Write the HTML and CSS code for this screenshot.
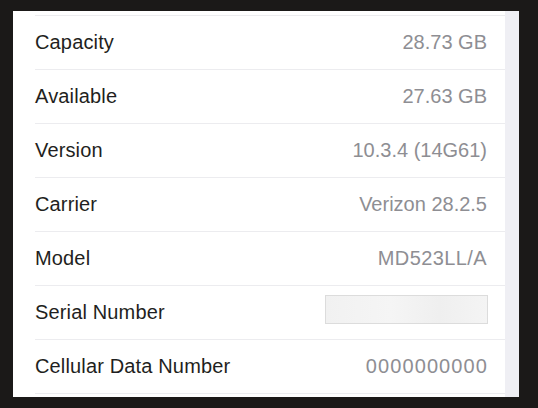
FILE: index.html
```html
<!DOCTYPE html>
<html>
<head>
<meta charset="utf-8">
<link rel="stylesheet" href="styles.css">
</head>
<body>
<div class="frame">
  <div class="panel">
    <ul class="list">
      <li class="row"><span class="label">Capacity</span><span class="value">28.73 GB</span></li>
      <li class="row"><span class="label">Available</span><span class="value">27.63 GB</span></li>
      <li class="row"><span class="label">Version</span><span class="value">10.3.4 (14G61)</span></li>
      <li class="row"><span class="label">Carrier</span><span class="value">Verizon 28.2.5</span></li>
      <li class="row"><span class="label">Model</span><span class="value value-wide">MD523LL/A</span></li>
      <li class="row"><span class="label">Serial Number</span><span class="redacted"></span></li>
      <li class="row"><span class="label">Cellular Data Number</span><span class="value value-digits">0000000000</span></li>
    </ul>
  </div>
  <div class="stripe"></div>
</div>
</body>
</html>
```
FILE: styles.css
```css
html, body {
  margin: 0;
  padding: 0;
  background: #1b1918;
  width: 538px;
  height: 408px;
  overflow: hidden;
}
.frame {
  display: flex;
  margin: 11px 0 0 13px;
  width: 506px;
  height: 386px;
}
.panel {
  width: 492px;
  background: #ffffff;
  padding-top: 4px;
  box-sizing: border-box;
}
.stripe {
  width: 14px;
  background: #efeff4;
}
.list {
  list-style: none;
  margin: 0 0 0 22px;
  padding: 0;
  border-top: 1px solid #ececef;
}
.row {
  display: flex;
  align-items: center;
  justify-content: space-between;
  height: 53px;
  border-bottom: 1px solid #ececef;
  padding-right: 18px;
  font-family: "Liberation Sans", Arial, sans-serif;
  font-size: 20px;
}
.label {
  color: #1f1f21;
  letter-spacing: 0.15px;
}
.value {
  color: #8e8e93;
}
.value-wide {
  letter-spacing: 0.4px;
}
.value-digits {
  letter-spacing: 1.1px;
  margin-right: -1px;
}
.redacted {
  width: 161px;
  height: 27px;
  border: 1px solid #dcdcdc;
  background: linear-gradient(90deg, #f1f1f1, #f5f5f5 40%, #efefef 70%, #f4f4f4);
  margin-bottom: 6px;
  margin-right: -1px;
}
```
